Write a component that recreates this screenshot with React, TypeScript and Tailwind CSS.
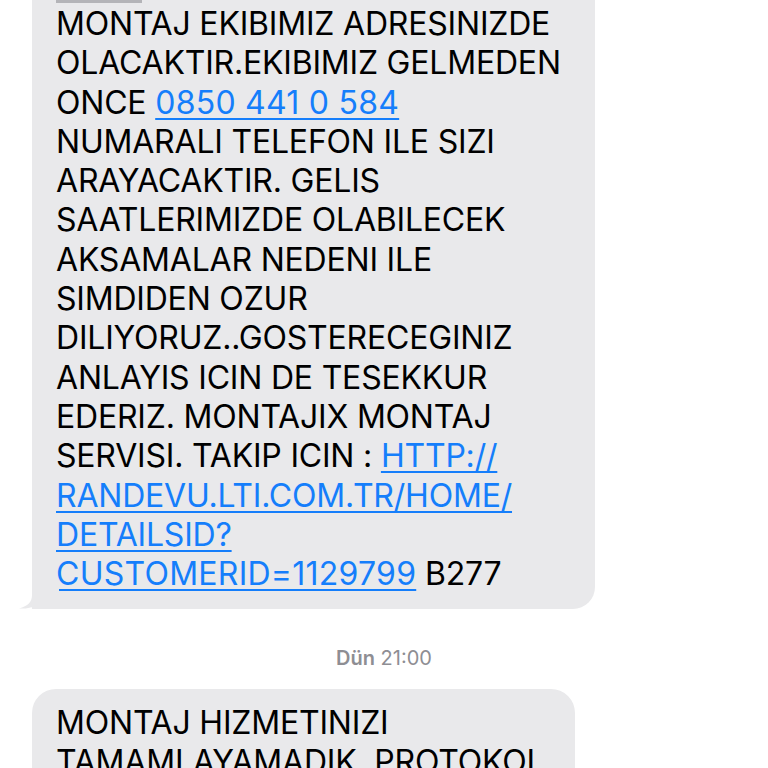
import React from "react";

const Link = ({ children, wide }: { children: React.ReactNode; wide?: boolean }) => (
  <span
    className={
      wide
        ? "text-[#157efb] underline decoration-[2px] underline-offset-[4px] tracking-[0.25px]"
        : "text-[#157efb] underline decoration-[2px] underline-offset-[4px]"
    }
  >
    {children}
  </span>
);

export default function App() {
  return (
    <div className="w-[768px] h-[768px] overflow-hidden bg-white font-['Inter',sans-serif] text-black">
      <div className="relative ml-[32px] w-[563px] rounded-b-[22px] bg-[#e9e9eb] pl-[24px] pr-[16px] pb-[16px]">
        <div className="h-[3px] w-[86px] bg-[#b4b4b8]" />
        <div className="pt-[1px] text-[32px] leading-[39.3px] tracking-[-0.2px]">
          MONTAJ EKIBIMIZ ADRESINIZDE
          <br />
          OLACAKTIR.EKIBIMIZ GELMEDEN
          <br />
          ONCE <Link wide>0850 441 0 584</Link>
          <br />
          NUMARALI TELEFON ILE SIZI
          <br />
          ARAYACAKTIR. GELIS
          <br />
          SAATLERIMIZDE OLABILECEK
          <br />
          AKSAMALAR NEDENI ILE
          <br />
          SIMDIDEN OZUR
          <br />
          DILIYORUZ..GOSTERECEGINIZ
          <br />
          ANLAYIS ICIN DE TESEKKUR
          <br />
          EDERIZ. MONTAJIX MONTAJ
          <br />
          SERVISI. TAKIP ICIN : <Link>HTTP://</Link>
          <br />
          <Link>RANDEVU.LTI.COM.TR/HOME/</Link>
          <br />
          <Link>DETAILSID?</Link>
          <br />
          <Link wide>CUSTOMERID=1129799</Link> B277
        </div>
        <svg
          className="absolute left-[-13px] bottom-0"
          width="40"
          height="26"
          viewBox="0 0 40 26"
        >
          <path d="M13 0 L13 12 C13 19 9 23 0 25.5 C6 26 12 25 18 22 C22 24.5 28 26 36 26 L13 26 Z" fill="#e9e9eb" />
          <path d="M13 0 L13 26 L40 26 L40 0 Z" fill="#e9e9eb" />
        </svg>
      </div>

      <div className="mt-[37px] text-center text-[20px] leading-[24px] text-[#8e8e93]">
        <span className="font-semibold">Dün</span> 21:00
      </div>

      <div className="ml-[32px] mt-[19px] w-[543px] rounded-[24px] bg-[#e9e9eb] pl-[24px] pr-[16px] pt-[15px] pb-[14px]">
        <div className="text-[32px] leading-[38.5px] tracking-[-0.2px]">
          MONTAJ HIZMETINIZI
          <br />
          TAMAMLAYAMADIK. PROTOKOL
        </div>
      </div>
    </div>
  );
}
